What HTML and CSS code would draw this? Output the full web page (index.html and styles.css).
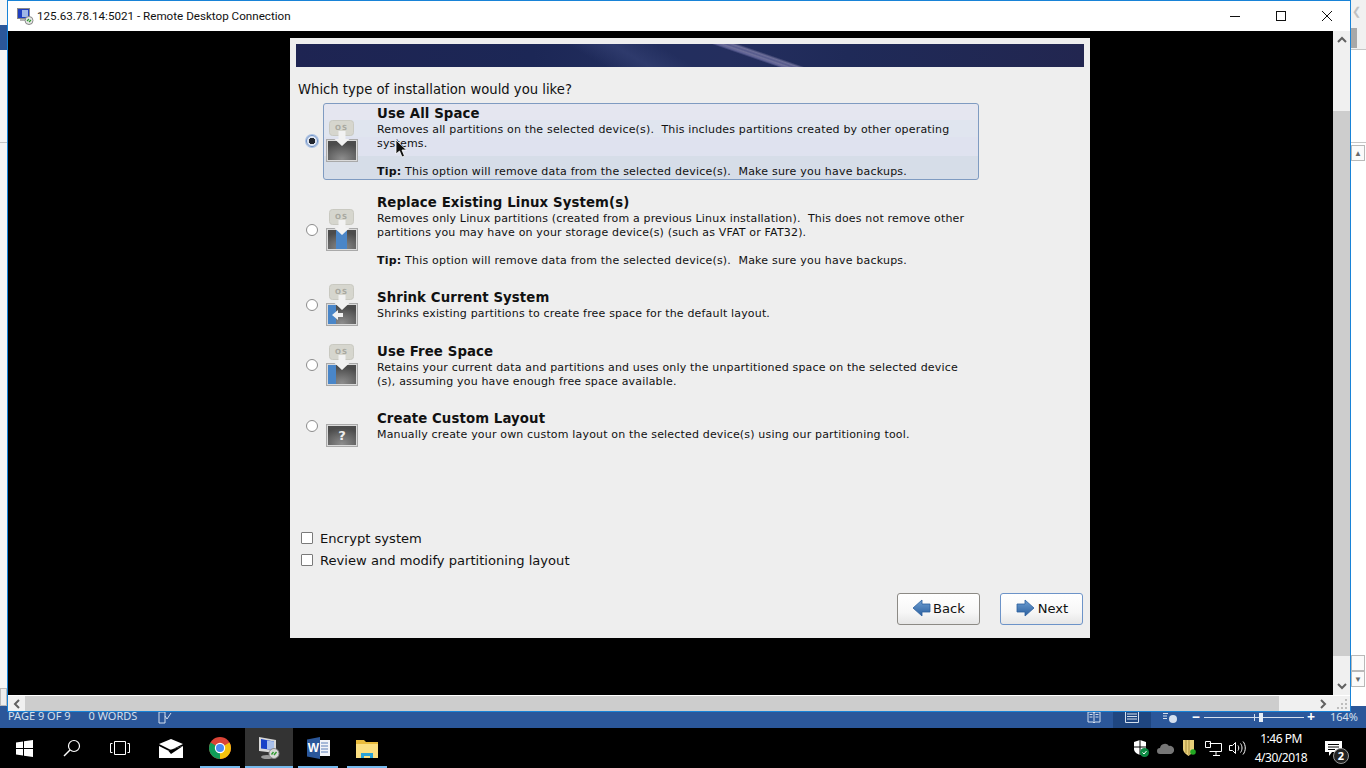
FILE: index.html
```html
<!DOCTYPE html>
<html lang="en">
<head>
    <meta charset="UTF-8">
    <title>Remote Desktop Connection</title>
    <link rel="stylesheet" href="styles.css">
</head>
<body>
<svg class="defs" width="0" height="0">
    <defs>
        <radialGradient id="driveFill" cx="50%" cy="90%" r="75%">
            <stop offset="0" stop-color="#8d8d8d"/>
            <stop offset="1" stop-color="#4c4c4c"/>
        </radialGradient>
        <linearGradient id="arrowFill" x1="0" y1="0" x2="0" y2="1">
            <stop offset="0" stop-color="#6f9fd2"/>
            <stop offset="1" stop-color="#2a5f9f"/>
        </linearGradient>
        <symbol id="osTag" viewBox="0 0 32 42">
            <rect x="3.500" y="0.500" width="24" height="15" rx="3" fill="#d6d6ce" stroke="#c9c9c1"/>
            <text x="15.500" y="9.500" text-anchor="middle" class="os-label">OS</text>
        </symbol>
        <symbol id="driveFrame" viewBox="0 0 32 42">
            <rect x="0.500" y="19.500" width="31" height="22" fill="none" stroke="#a9a9a9"/>
            <rect x="1.500" y="20.500" width="29" height="20" fill="none" stroke="#dadada"/>
        </symbol>
        <symbol id="downArrow" viewBox="0 0 32 42">
            <path d="M12.500 11h7v8h4l-7.500 7-7.500-7h4z" fill="#f2f2f2"/>
        </symbol>
        <symbol id="navArrow" viewBox="0 0 20 18">
            <path d="M10 1v4h8v8h-8v4L1 9z" fill="url(#arrowFill)" stroke="#2c5f9e" stroke-width="0.8"/>
        </symbol>
    </defs>
</svg>

<div class="desktop">
    <div class="word-app">
        <div class="word-side word-left">
            <div class="word-ribbon"></div>
            <div class="word-rule"></div>
            <div class="word-ruler"></div>
        </div>
        <div class="word-side word-right">
            <div class="word-top"><span class="word-chev">&#10094;</span><span class="word-tab"></span></div>
            <div class="word-rule word-rule-top"></div>
            <div class="word-rule word-rule-mid"></div>
            <div class="word-btn word-btn-up">&#9650;</div>
            <div class="word-btn word-btn-low"></div>
            <div class="word-btn word-btn-down">&#9660;</div>
        </div>
        <div class="status-bar">
            <span class="status-text">PAGE 9 OF 9</span>
            <span class="status-text status-words">0 WORDS</span>
            <svg class="status-proof" width="14" height="14" viewBox="0 0 14 14"><path d="M1 1h6v11H1zM7 5l2 3 4-6" fill="none" stroke="#d5e0ef"/></svg>
            <div class="status-right">
                <svg width="14" height="12" viewBox="0 0 14 12"><path d="M1 1h5l1 1 1-1h5v10H8l-1 1-1-1H1zM7 2v9M2.500 3.500h3M2.500 6h3M8.500 3.500h3M8.500 6h3" fill="none" stroke="#d5e0ef"/></svg>
                <div class="view-active">
                    <svg width="14" height="12" viewBox="0 0 14 12"><path d="M0.500 0.500h13v11h-13zM2 3h10M2 5.500h10M2 8h10" fill="none" stroke="#d5e0ef"/></svg>
                </div>
                <svg class="view-web" width="16" height="14" viewBox="0 0 16 14"><path d="M1 1h8M1 3.500h5M1 6h4M1 8.500h4" fill="none" stroke="#d5e0ef"/><circle cx="11" cy="9" r="4" fill="#d5e0ef"/></svg>
                <span class="zoom-sign zoom-minus">&#8722;</span>
                <div class="zoom-track"><span class="zoom-mid"></span><span class="zoom-thumb"></span></div>
                <span class="zoom-sign zoom-plus">+</span>
                <span class="status-text zoom-value">164%</span>
            </div>
        </div>
    </div>

    <div class="rdp-window">
        <div class="title-bar">
            <svg class="app-icon" width="17" height="17" viewBox="0 0 17 17">
                <rect x="0.500" y="0.500" width="12" height="10" fill="#1f3fc0" stroke="#8a8a8a"/>
                <path d="M5 2h6v7H5z" fill="#9fb7e8"/>
                <path d="M3 11h7v2H3z" fill="#b5b5b5"/>
                <circle cx="12" cy="12.500" r="4" fill="#e8e8e8" stroke="#888"/>
                <path d="M10 13l2-2M12 14l2-2" stroke="#2f9b2f" stroke-width="1.200"/>
            </svg>
            <span class="title-text">125.63.78.14:5021 - Remote Desktop Connection</span>
            <div class="window-controls">
                <svg width="12" height="12" viewBox="0 0 12 12"><path d="M1 6.500h10" stroke="#111"/></svg>
                <svg width="12" height="12" viewBox="0 0 12 12"><rect x="1.500" y="1.500" width="9" height="9" fill="none" stroke="#111"/></svg>
                <svg width="12" height="12" viewBox="0 0 12 12"><path d="M1 1l10 10M11 1L1 11" stroke="#111"/></svg>
            </div>
        </div>
        <div class="remote-area">
            <div class="remote-screen">
                <div class="installer">
                    <div class="banner"><div class="banner-glow"></div><div class="banner-streak"></div></div>
                    <p class="question">Which type of installation would you like?</p>

                    <div class="options">
                        <label class="option option-first">
                            <input class="radio" type="radio" name="install" checked>
                            <svg class="option-icon" width="32" height="42" viewBox="0 0 32 42">
                                <use href="#osTag"/>
                                <rect x="1" y="20" width="30" height="21" fill="url(#driveFill)"/>
                                <use href="#driveFrame"/>
                                <use href="#downArrow"/>
                            </svg>
                            <div class="option-text option-selected">
                                <h2 class="option-title">Use All Space</h2>
                                <p class="option-desc">Removes all partitions on the selected device(s).&nbsp; This includes partitions created by other operating systems.</p>
                                <p class="option-tip"><b>Tip:</b> This option will remove data from the selected device(s).&nbsp; Make sure you have backups.</p>
                            </div>
                        </label>

                        <label class="option option-replace">
                            <input class="radio" type="radio" name="install">
                            <svg class="option-icon" width="32" height="42" viewBox="0 0 32 42">
                                <use href="#osTag"/>
                                <rect x="1" y="20" width="30" height="21" fill="url(#driveFill)"/>
                                <rect x="10" y="21" width="11" height="20" fill="#4a86c8"/>
                                <use href="#driveFrame"/>
                                <use href="#downArrow"/>
                            </svg>
                            <div class="option-text">
                                <h2 class="option-title">Replace Existing Linux System(s)</h2>
                                <p class="option-desc">Removes only Linux partitions (created from a previous Linux installation).&nbsp; This does not remove other partitions you may have on your storage device(s) (such as VFAT or FAT32).</p>
                                <p class="option-tip"><b>Tip:</b> This option will remove data from the selected device(s).&nbsp; Make sure you have backups.</p>
                            </div>
                        </label>

                        <label class="option option-shrink">
                            <input class="radio" type="radio" name="install">
                            <svg class="option-icon" width="32" height="42" viewBox="0 0 32 42">
                                <use href="#osTag"/>
                                <rect x="1" y="20" width="30" height="21" fill="url(#driveFill)"/>
                                <rect x="2" y="21" width="8" height="20" fill="#4a86c8"/>
                                <use href="#driveFrame"/>
                                <use href="#downArrow"/>
                                <path d="M6 31l6-5v3h5v4h-5v3z" fill="#f2f2f2"/>
                            </svg>
                            <div class="option-text">
                                <h2 class="option-title">Shrink Current System</h2>
                                <p class="option-desc">Shrinks existing partitions to create free space for the default layout.</p>
                            </div>
                        </label>

                        <label class="option option-free">
                            <input class="radio" type="radio" name="install">
                            <svg class="option-icon" width="32" height="42" viewBox="0 0 32 42">
                                <use href="#osTag"/>
                                <rect x="1" y="20" width="30" height="21" fill="url(#driveFill)"/>
                                <rect x="2" y="21" width="8" height="20" fill="#4a86c8"/>
                                <use href="#driveFrame"/>
                                <use href="#downArrow"/>
                            </svg>
                            <div class="option-text">
                                <h2 class="option-title">Use Free Space</h2>
                                <p class="option-desc">Retains your current data and partitions and uses only the unpartitioned space on the selected device (s), assuming you have enough free space available.</p>
                            </div>
                        </label>

                        <label class="option option-custom">
                            <input class="radio" type="radio" name="install">
                            <svg class="option-icon" width="32" height="42" viewBox="0 0 32 42">
                                <rect x="1" y="20" width="30" height="21" fill="url(#driveFill)"/>
                                <use href="#driveFrame"/>
                                <text x="16" y="35" text-anchor="middle" class="drive-mark">?</text>
                            </svg>
                            <div class="option-text">
                                <h2 class="option-title">Create Custom Layout</h2>
                                <p class="option-desc">Manually create your own custom layout on the selected device(s) using our partitioning tool.</p>
                            </div>
                        </label>
                    </div>

                    <div class="checks">
                        <label class="check"><input class="checkbox" type="checkbox">Encrypt system</label>
                        <label class="check"><input class="checkbox" type="checkbox">Review and modify partitioning layout</label>
                    </div>

                    <div class="nav-buttons">
                        <button class="nav-btn"><svg width="20" height="18"><use href="#navArrow"/></svg>Back</button>
                        <button class="nav-btn nav-btn-focus"><svg class="flip" width="20" height="18"><use href="#navArrow"/></svg>Next</button>
                    </div>
                </div>
                <svg class="pointer" width="12" height="19" viewBox="0 0 12 19">
                    <path d="M1 1v14l3.500-3 2.500 6 2.500-1-2.500-6h4.500z" fill="#111" stroke="#fff" stroke-width="0.800"/>
                </svg>
            </div>
            <div class="v-scroll">
                <span class="scroll-arrow">
                    <svg width="10" height="7" viewBox="0 0 10 7"><path d="M1 6l4-4 4 4" fill="none" stroke="#606060" stroke-width="2"/></svg>
                </span>
                <div class="v-track"><div class="v-thumb"></div></div>
                <span class="scroll-arrow">
                    <svg width="10" height="7" viewBox="0 0 10 7"><path d="M1 1l4 4 4-4" fill="none" stroke="#606060" stroke-width="2"/></svg>
                </span>
            </div>
        </div>
        <div class="h-scroll">
            <span class="scroll-arrow h-arrow">
                <svg width="7" height="10" viewBox="0 0 7 10"><path d="M6 1L2 5l4 4" fill="none" stroke="#606060" stroke-width="2"/></svg>
            </span>
            <div class="h-thumb"></div>
            <span class="scroll-arrow h-arrow">
                <svg width="7" height="10" viewBox="0 0 7 10"><path d="M1 1l4 4-4 4" fill="none" stroke="#606060" stroke-width="2"/></svg>
            </span>
            <svg class="grip" width="16" height="16" viewBox="0 0 16 16"><path d="M11 3h2v2h-2zM7 7h2v2H7zM11 7h2v2h-2zM3 11h2v2H3zM7 11h2v2H7zM11 11h2v2h-2z" fill="#bdbdbd"/></svg>
        </div>
    </div>
</div>

<div class="taskbar">
    <div class="task-item">
        <svg width="17" height="17" viewBox="0 0 17 17"><path d="M0 2.500l7-1v6.500H0zM8 1.300l9-1.300v8H8zM0 9h7v6.500l-7-1zM8 9h9v8l-9-1.300z" fill="#fff"/></svg>
    </div>
    <div class="task-item">
        <svg width="18" height="18" viewBox="0 0 18 18"><circle cx="11" cy="7" r="5.500" fill="none" stroke="#fff" stroke-width="1.200"/><path d="M7 11l-6 6" stroke="#fff" stroke-width="1.500"/></svg>
    </div>
    <div class="task-item">
        <svg width="20" height="14" viewBox="0 0 20 14"><path d="M4.500 0.500h11v13h-11zM2.500 2.500h-2v9h2M17.500 2.500h2v9h-2" fill="none" stroke="#fff"/></svg>
    </div>
    <div class="task-item task-mail">
        <svg width="24" height="19" viewBox="0 0 24 19"><path d="M0 5L12 0l12 5-12 6z M0 7l9 4.500L24 7v12H0z" fill="#fff"/><path d="M9 11.500L24 7 12 15z" fill="#000"/></svg>
    </div>
    <div class="task-item task-open">
        <svg width="22" height="22" viewBox="0 0 22 22"><circle cx="11" cy="11" r="11" fill="#db4437"/><path d="M11 11L20.500 5.500A11 11 0 0 1 11 22z" fill="#f4c20d"/><path d="M11 11L11 22A11 11 0 0 1 1.500 5.500z" fill="#0f9d58"/><circle cx="11" cy="11" r="5.200" fill="#fff"/><circle cx="11" cy="11" r="4" fill="#4a8af4"/></svg>
    </div>
    <div class="task-item task-open task-active">
        <svg width="24" height="24" viewBox="0 0 24 24">
            <path d="M2 1l17 3v13L2 15z" fill="#d8d8d8"/>
            <path d="M4 3l13 2.500V14L4 12.500z" fill="#1640c8"/>
            <path d="M10 4.500l7 1V14l-7-1z" fill="#a9c0ea"/>
            <ellipse cx="10" cy="21" rx="6" ry="2" fill="#9a9a9a"/>
            <circle cx="17" cy="17.500" r="5" fill="#d8d8d8" stroke="#888"/>
            <path d="M14.500 18.500l2-2.500M17 19l2.500-3" stroke="#2f9b2f" stroke-width="1.400"/>
        </svg>
    </div>
    <div class="task-item task-open">
        <svg width="23" height="22" viewBox="0 0 23 22"><path d="M12 3h11v16H12z" fill="#f0f3f8"/><path d="M14 6h7M14 9h7M14 12h7M14 15h7" stroke="#5a7fb8"/><path d="M0 2.500L13 0v22L0 19.500z" fill="#2b579a"/><text x="6.500" y="15" text-anchor="middle" class="word-mark">W</text></svg>
    </div>
    <div class="task-item task-open">
        <svg width="22" height="19" viewBox="0 0 22 19"><path d="M0 1h8l2 2h12v16H0z" fill="#e9bb3c"/><path d="M0 5h22v14H0z" fill="#fbdf81"/><path d="M5 19v-5h12v5h-3v-2H8v2z" fill="#2aa3d8"/></svg>
    </div>

    <div class="tray">
        <svg width="16" height="17" viewBox="0 0 16 17"><path d="M1 2l6-2 6 2v7c0 3-3 5-6 6-3-1-6-3-6-6z" fill="#fff"/><path d="M7 0v15M1 7h12" stroke="#000"/><circle cx="11.500" cy="12.500" r="4.500" fill="#0d8a43"/><path d="M9.500 12.500l1.500 1.500 2.500-3" fill="none" stroke="#fff"/></svg>
        <svg width="17" height="11" viewBox="0 0 17 11"><path d="M3 11a3 3 0 0 1 0-6 5 5 0 0 1 9-2 4 4 0 0 1 2 8z" fill="#767676"/></svg>
        <svg width="15" height="16" viewBox="0 0 15 16"><path d="M1 0h11v9c0 3-3 5-5.500 7C4 14 1 12 1 9z" fill="#e8cf7a"/><path d="M4 0v13M7 0v15" stroke="#a98f3f"/><circle cx="11" cy="12" r="2.800" fill="#22a822"/></svg>
        <svg width="17" height="15" viewBox="0 0 17 15"><path d="M4.500 2.500h12v8h-12M8 14.500h7M11 10.500v4M0.500 0.500h5v6h-5z" fill="none" stroke="#fff"/></svg>
        <svg class="tray-volume" width="17" height="14" viewBox="0 0 17 14"><path d="M0.500 4.500h3l3-3v11l-3-3h-3zM9 4.500c1 1.500 1 3.500 0 5M11.500 2.500c2 2.500 2 6.500 0 9M14 0.500c3 3.500 3 9.500 0 13" fill="none" stroke="#fff"/></svg>
        <div class="clock"><span>1:46 PM</span><span>4/30/2018</span></div>
        <div class="notify">
            <svg width="17" height="15" viewBox="0 0 17 15"><path d="M0 0h17v11H7l-3 4v-4H0z" fill="#fff"/><path d="M3 3.500h11M3 6h11M3 8.500h7" stroke="#000"/></svg>
            <span class="notify-badge">2</span>
        </div>
    </div>
</div>
</body>
</html>
```

FILE: styles.css
```css
* {
    box-sizing: border-box;
}

html, body {
    height: 100%;
    margin: 0;
}

body {
    display: flex;
    flex-direction: column;
    background: #fff;
    font-family: "Noto Sans", Arial, sans-serif;
    overflow: hidden;
}

.defs {
    position: absolute;
}

.os-label {
    font-family: "DejaVu Sans", sans-serif;
    font-size: 7px;
    font-weight: bold;
    fill: #a8a8a0;
    letter-spacing: 1px;
}

.drive-mark {
    font-family: "DejaVu Sans", sans-serif;
    font-size: 13px;
    font-weight: bold;
    fill: #eee;
}

.word-mark {
    font-family: "Liberation Sans", sans-serif;
    font-size: 12px;
    font-weight: bold;
    fill: #fff;
}

/* desktop: word behind, rdp window on top */
.desktop {
    position: relative;
    height: 728px;
    flex: none;
}

.word-app {
    position: absolute;
    inset: 0;
    background: #fff;
}

.word-side {
    position: absolute;
    top: 0;
    bottom: 16px;
    background: #f6f6f6;
}

.word-left {
    left: 0;
    width: 8px;
}

.word-ribbon {
    height: 25px;
    margin-top: 25px;
    background: #2b579a;
}

.word-rule {
    height: 1px;
    background: #c6c6c6;
}

.word-left .word-rule {
    margin-top: 92px;
}

.word-ruler {
    position: absolute;
    left: 0;
    top: 688px;
    width: 7px;
    height: 18px;
    border: 1px solid #bbb;
    background: #eee;
}

.word-right {
    right: 0;
    width: 15px;
    background: #fff;
}

.word-top {
    position: relative;
    height: 49px;
    background: #f1f1f1;
}

.word-chev {
    position: absolute;
    left: 1px;
    top: 3px;
    color: #c0c0c0;
    font-size: 11px;
}

.word-tab {
    position: absolute;
    left: 0;
    top: 28px;
    width: 6px;
    height: 20px;
    background: #a8a8a8;
}

.word-rule-top {
    background: #c6c6c6;
}

.word-rule-mid {
    margin-top: 92px;
}

.word-btn {
    position: absolute;
    left: 0;
    width: 14px;
    height: 16px;
    border: 1px solid #b9b9b9;
    background: #fbfbfb;
    color: #6a6a6a;
    font-size: 8px;
    line-height: 14px;
    text-align: center;
}

.word-btn-up {
    top: 145px;
}

.word-btn-low {
    top: 655px;
}

.word-btn-down {
    top: 671px;
}

.status-bar {
    position: absolute;
    left: 0;
    right: 0;
    bottom: 0;
    height: 22px;
    display: flex;
    align-items: flex-end;
    padding-left: 8px;
    background: #2b579a;
}

.status-text {
    color: #d5e0ef;
    font-size: 11px;
    line-height: 16px;
    margin-bottom: 4px;
}

.status-words {
    margin-left: 18px;
}

.status-proof {
    margin: 0 0 3px 21px;
}

.status-right {
    margin-left: auto;
    display: flex;
    align-items: center;
    height: 22px;
}

.view-active {
    display: flex;
    justify-content: center;
    align-items: center;
    width: 38px;
    height: 22px;
    margin: 0 11px 0 12px;
    background: #1f4680;
}

.view-web {
    margin-right: 14px;
}

.zoom-sign {
    color: #fff;
    font-size: 14px;
    font-weight: bold;
    line-height: 14px;
}

.zoom-track {
    position: relative;
    width: 100px;
    height: 1px;
    margin: 0 3px 0 4px;
    background: #d5e0ef;
}

.zoom-mid {
    position: absolute;
    left: 50px;
    top: -3px;
    width: 1px;
    height: 7px;
    background: #d5e0ef;
}

.zoom-thumb {
    position: absolute;
    left: 55px;
    top: -4px;
    width: 4px;
    height: 9px;
    background: #e6edf6;
}

.zoom-value {
    margin: 0 8px 0 15px;
}

/* rdp window */
.rdp-window {
    position: absolute;
    left: 7px;
    top: 0;
    width: 1344px;
    height: 712px;
    display: flex;
    flex-direction: column;
    border: 1px solid #1883d7;
    background: #f0f0f0;
}

.title-bar {
    display: flex;
    align-items: center;
    height: 30px;
    flex: none;
    padding: 0 0 0 9px;
    background: #fff;
}

.app-icon {
    margin-right: 3px;
}

.title-text {
    color: #111;
    font-family: Roboto, sans-serif;
    font-size: 11.65px;
}

.window-controls {
    margin-left: auto;
    display: flex;
    gap: 34px;
    padding-right: 17px;
}

.remote-area {
    flex: 1;
    display: flex;
    min-height: 0;
}

.remote-screen {
    position: relative;
    flex: 1;
    background: #000;
    padding: 7px 0 0 282px;
}

.pointer {
    position: absolute;
    left: 387px;
    top: 108px;
}

.v-scroll {
    width: 17px;
    flex: none;
    display: flex;
    flex-direction: column;
    background: #f0f0f0;
}

.scroll-arrow {
    display: flex;
    align-items: center;
    justify-content: center;
    height: 17px;
    flex: none;
}

.v-track {
    flex: 1;
    padding-top: 63px;
    padding-bottom: 22px;
}

.v-thumb {
    height: 100%;
    background: #cdcdcd;
}

.h-scroll {
    display: flex;
    height: 16px;
    flex: none;
    border-top: 1px solid #fff;
    background: #f0f0f0;
}

.h-arrow {
    width: 17px;
    height: 15px;
}

.h-thumb {
    width: 1254px;
    background: #cdcdcd;
}

.h-arrow + .h-thumb + .h-arrow {
    margin-left: 36px;
}

.grip {
    margin-left: auto;
}

/* installer */
.installer {
    width: 800px;
    height: 600px;
    display: flex;
    flex-direction: column;
    padding: 6px 6px 13px;
    background: #eeeeee;
    font-family: "DejaVu Sans", sans-serif;
    color: #111;
}

.banner {
    position: relative;
    height: 23px;
    flex: none;
    overflow: hidden;
    background: linear-gradient(90deg, #1e2452 0%, #1c2756 30%, #222e5e 45%, #242e5e 55%, #1f2a58 70%, #222650 100%);
}

.banner-glow {
    position: absolute;
    left: 290px;
    top: 0;
    width: 90px;
    height: 23px;
    background: linear-gradient(90deg, transparent, #2e3a6c, transparent);
    transform: skewX(60deg);
}

.banner-streak {
    position: absolute;
    left: 448px;
    top: 0;
    width: 28px;
    height: 23px;
    background: linear-gradient(90deg, transparent, #5c5f93 20%, #6f7099 40%, #565a8c 55%, #6d6e98 75%, transparent);
    transform: skewX(71deg);
}

.question {
    margin: 15px 0 5px 2px;
    font-size: 13.2px;
    line-height: 16px;
}

.options {
    display: flex;
    flex-direction: column;
}

.option {
    display: flex;
    align-items: center;
}

.option-replace {
    margin-top: 12px;
}

.option-shrink {
    margin-top: 18px;
}

.option-free {
    margin-top: 19px;
}

.option-custom {
    margin-top: 18px;
}

.radio {
    appearance: none;
    width: 12px;
    height: 12px;
    flex: none;
    margin: 0 5px 1px 10px;
    border: 1px solid #8c8c8c;
    border-radius: 50%;
    background: #fff;
}

.radio:checked {
    border: 1px solid #6b8fc7;
    background: radial-gradient(circle, #22262e 0 3px, #dfe6f2 3.5px);
    box-shadow: 0 0 0 1px #a9c0e2;
}

.option-icon {
    flex: none;
    margin: -6px -35px -5px 3px;
    position: relative;
    z-index: 1;
}

/* single line options sit half a pixel lower */
.option-shrink .radio,
.option-custom .radio {
    margin-bottom: 0;
}

.option-shrink .option-icon,
.option-custom .option-icon {
    margin-top: -5px;
    margin-bottom: -6px;
}

.option-text {
    width: 656px;
    padding: 2px 5px 0 53px;
    border: 1px solid transparent;
    border-radius: 3px;
    font-size: 11px;
    line-height: 14px;
}

.option-selected {
    border-color: #7f9bc1;
    background: linear-gradient(180deg, #e5e6f0 0 22%, #e0e5ef 22% 44%, #dfe2ef 44% 70%, #d6dde8 70% 100%);
}

.option-title {
    margin: 0 0 2px;
    font-size: 13.3px;
    font-weight: bold;
    line-height: 15px;
    letter-spacing: 0.1px;
}

.option-desc {
    margin: 0;
    letter-spacing: 0.17px;
}

.option-tip {
    margin: 14px 0 0;
    letter-spacing: 0.21px;
}

.checks {
    margin: 87px 0 0 5px;
    display: flex;
    flex-direction: column;
    gap: 6px;
}

.check {
    display: flex;
    align-items: center;
    height: 16px;
    font-size: 13.1px;
}

.checkbox {
    appearance: none;
    width: 12px;
    height: 12px;
    margin: 0 7px 0 0;
    border: 1px solid #7a7a7a;
    border-radius: 1px;
    background: #fff;
}

.nav-buttons {
    margin-top: auto;
    display: flex;
    justify-content: flex-end;
    gap: 20px;
    padding-right: 1px;
}

.nav-btn {
    display: flex;
    align-items: center;
    justify-content: center;
    gap: 1px;
    width: 83px;
    height: 32px;
    padding: 0 0 2px;
    border: 1px solid #8c8a85;
    border-radius: 3px;
    background: linear-gradient(180deg, #fff 0%, #f7f7f7 60%, #e6e6e6 100%);
    color: #111;
    font-family: "DejaVu Sans", sans-serif;
    font-size: 13.1px;
}

.nav-btn-focus {
    gap: 3px;
    border-color: #6c93c8;
}

.flip {
    transform: scaleX(-1);
}

/* taskbar */
.taskbar {
    height: 40px;
    flex: none;
    display: flex;
    background: #000;
}

.task-item {
    position: relative;
    width: 48px;
    flex: none;
    display: flex;
    align-items: center;
    justify-content: center;
}

.task-mail {
    width: 52px;
    padding-left: 2px;
}

.task-open {
    margin-right: 1px;
}

.task-open::after {
    content: "";
    position: absolute;
    left: 4px;
    right: 4px;
    bottom: 0;
    height: 2px;
    background: #76b9ed;
}

.task-active {
    background: #333;
}

.task-active::after {
    left: 0;
    right: 0;
}

.tray {
    margin-left: auto;
    display: flex;
    align-items: center;
    gap: 8px;
    padding-right: 24px;
    color: #fff;
}

.tray-volume {
    margin-left: -1px;
}

.clock {
    display: flex;
    flex-direction: column;
    align-items: center;
    width: 66px;
    margin: 0 3px 0 -6px;
    font-size: 12px;
    line-height: 19px;
    letter-spacing: -0.5px;
}

.notify {
    position: relative;
    display: flex;
}

.notify-badge {
    position: absolute;
    left: 8px;
    top: 7px;
    width: 16px;
    height: 16px;
    border: 1px solid #999;
    border-radius: 50%;
    background: #222;
    font-size: 11px;
    font-weight: bold;
    line-height: 14px;
    text-align: center;
}
```
